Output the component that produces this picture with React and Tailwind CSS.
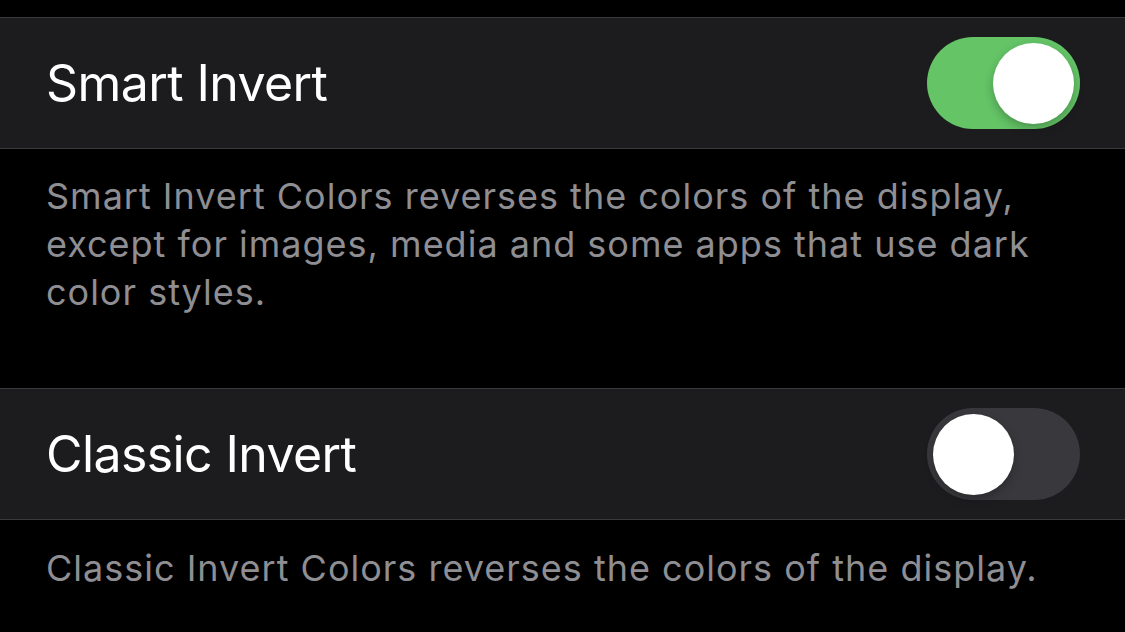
import { useState } from "react";

function Toggle({ on, onChange }) {
    return (
        <button
            onClick={() => onChange(!on)}
            className={
                "w-[153px] h-[92px] rounded-full flex items-center px-[6px] shrink-0 " +
                (on ? "bg-[#64c466] justify-end" : "bg-[#39393d] justify-start")
            }
        >
            <span className="w-[81px] h-[81px] rounded-full bg-white shadow-[0_4px_10px_rgba(0,0,0,0.25)]" />
        </button>
    );
}

function Row({ label, on, onChange }) {
    return (
        <div className="h-[132px] bg-[#1c1c1e] border-y border-[#3a3a3c] flex items-center justify-between pl-[46px] pr-[45px]">
            <span className="text-[50px] text-white tracking-[-0.6px]">{label}</span>
            <Toggle on={on} onChange={onChange} />
        </div>
    );
}

export default function App() {
    const [smart, setSmart] = useState(true);
    const [classic, setClassic] = useState(false);

    return (
        <div className="w-[1125px] h-[632px] bg-black overflow-hidden pt-[17px] font-['Inter',sans-serif]">
            <Row label="Smart Invert" on={smart} onChange={setSmart} />
            <div className="h-[239px] pt-[23px] pl-[46px] text-[36px] tracking-[1px] leading-[48px] text-[#8e8e93] whitespace-nowrap">
                Smart Invert Colors reverses the colors of the display,<br />
                except for images, media and some apps that use dark<br />
                color styles.
            </div>
            <Row label="Classic Invert" on={classic} onChange={setClassic} />
            <div className="pt-[24px] pl-[46px] text-[36px] tracking-[1px] leading-[48px] text-[#8e8e93] whitespace-nowrap">
                Classic Invert Colors reverses the colors of the display.
            </div>
        </div>
    );
}
